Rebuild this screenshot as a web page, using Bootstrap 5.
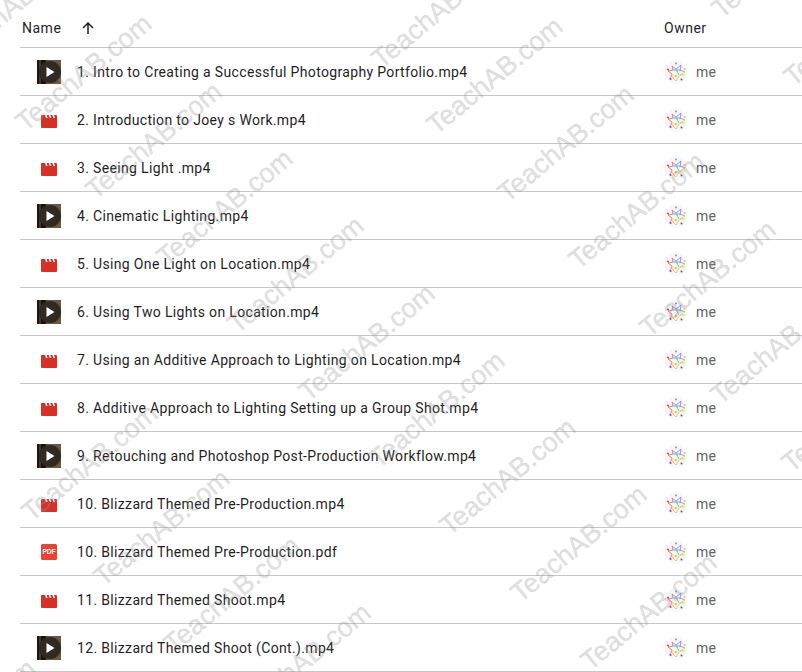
<!DOCTYPE html>
<html lang="en">

<head>
  <meta charset="UTF-8" />
  <meta name="viewport" content="width=device-width, initial-scale=1" />
  <title>Files</title>
  <link href="https://cdn.jsdelivr.net/npm/bootstrap@5.3.0/dist/css/bootstrap.min.css" rel="stylesheet" />
  <style>
    body {
      background-color: #fff;
      color: #1f1f1f;
      font-family: Roboto, "Liberation Sans", sans-serif;
      font-size: 14px;
      overflow: hidden;
      height: 672px;
    }

    .file-list {
      padding-left: 20px;
    }

    .list-head,
    .file-row {
      border-bottom: 1px solid #c7c7c7;
    }

    .list-head {
      height: 48px;
      padding-top: 10px;
      letter-spacing: .5px;
    }

    .file-row {
      height: 48px;
      padding-top: 1px;
    }

    .col-name {
      width: 644px;
      flex: none;
    }

    .head-name {
      padding-left: 2px;
    }

    .sort-arrow {
      margin-left: 19px;
      margin-top: -2px;
    }

    .icon-cell {
      width: 57px;
      flex: none;
      display: flex;
      justify-content: center;
      padding-left: 1px;
    }

    .icon-clap {
      margin-top: 3px;
    }

    .file-title {
      letter-spacing: .34px;
      white-space: nowrap;
      padding-top: 1px;
    }

    .owner-pic {
      margin-right: 8px;
    }

    .owner-name {
      color: #5f6368;
      letter-spacing: .25px;
      padding-top: 1px;
    }

    .watermarks {
      position: absolute;
      inset: 0;
      overflow: hidden;
      pointer-events: none;
    }

    .wm-text {
      position: absolute;
      transform: translate(-50%, -50%) rotate(-39.5deg);
      font-family: "Liberation Sans", sans-serif;
      font-size: 27px;
      line-height: 1;
      color: rgba(150, 150, 150, .3);
      white-space: nowrap;
      -webkit-text-stroke: .4px rgba(150, 150, 150, .3);
    }
  </style>
</head>

<body>
  <svg width="0" height="0" class="position-absolute">
    <symbol id="ico-video" viewBox="0 0 24 24">
      <rect width="24" height="24" fill="#6b5a3a" />
      <rect width="9" height="24" fill="#1b1510" />
      <rect x="2" width="2" height="24" fill="#4a3826" />
      <circle cx="13" cy="12" r="11" fill="#2f2a24" />
      <path d="M9.5 7 L17.5 12 L9.5 17 Z" fill="#fff" />
    </symbol>
    <symbol id="ico-clap" viewBox="0 0 16 13">
      <path d="M0 1 Q0 0 1 0 H15 Q16 0 16 1 V12 Q16 13 15 13 H1 Q0 13 0 12 Z" fill="#d93025" />
      <path d="M4 0 L5 3 H6.6 L5.6 0 Z M7.7 0 L8.7 3 H10.3 L9.3 0 Z M11.4 0 L12.4 3 H14 L13 0 Z" fill="#fff" />
    </symbol>
    <symbol id="ico-pdf" viewBox="0 0 16 16">
      <rect width="16" height="16" rx="1.5" fill="#ea4335" />
      <text x="8" y="10.4" text-anchor="middle" font-family="Liberation Sans, sans-serif" font-weight="700" font-size="6.6" fill="#fff">PDF</text>
    </symbol>
    <symbol id="ico-owner" viewBox="0 0 24 24">
      <circle cx="12" cy="12" r="11.5" fill="#f6f6fa" />
      <g fill="none" stroke-width=".8">
        <path d="M4 11 L9 10 L8 6 M4 11 L8 14 L6 19" stroke="#f2664b" />
        <path d="M8 6 L12 9 L17 5 L16 11" stroke="#a764c9" />
        <path d="M9 10 H16 L21 12 M12 9 L15 15" stroke="#35aee8" />
        <path d="M21 12 L16 15 H21 M8 14 L8 17 L12 21 L16 15" stroke="#fbc02d" />
      </g>
      <circle cx="12" cy="3.5" r="1" fill="#35aee8" />
      <circle cx="4" cy="9.5" r="1" fill="#e53935" />
      <circle cx="20.5" cy="9" r="1" fill="#fbc02d" />
      <circle cx="6.5" cy="19" r="1" fill="#8e44ad" />
      <circle cx="17.5" cy="19.5" r="1" fill="#00897b" />
      <circle cx="12" cy="16" r="1.2" fill="#fbc02d" />
    </symbol>
  </svg>

  <div class="file-list">
    <div class="list-head d-flex align-items-center">
      <div class="col-name head-name d-flex align-items-center">
        <span>Name</span>
        <svg class="sort-arrow" width="16" height="16" viewBox="0 0 16 16">
          <path d="M8 14 V3 M3 8 L8 3 L13 8" fill="none" stroke="#1f1f1f" stroke-width="1.5" />
        </svg>
      </div>
      <span>Owner</span>
    </div>
    <div id="rows"></div>
  </div>

  <div id="marks" class="watermarks"></div>

  <script>
    const files = [
      ["video", "1. Intro to Creating a Successful Photography Portfolio.mp4"],
      ["clap", "2. Introduction to Joey s Work.mp4"],
      ["clap", "3. Seeing Light .mp4"],
      ["video", "4. Cinematic Lighting.mp4"],
      ["clap", "5. Using One Light on Location.mp4"],
      ["video", "6. Using Two Lights on Location.mp4"],
      ["clap", "7. Using an Additive Approach to Lighting on Location.mp4"],
      ["clap", "8. Additive Approach to Lighting Setting up a Group Shot.mp4"],
      ["video", "9. Retouching and Photoshop Post-Production Workflow.mp4"],
      ["clap", "10. Blizzard Themed Pre-Production.mp4"],
      ["pdf", "10. Blizzard Themed Pre-Production.pdf"],
      ["clap", "11. Blizzard Themed Shoot.mp4"],
      ["video", "12. Blizzard Themed Shoot (Cont.).mp4"]
    ];
    const iconSize = { video: [24, 24], clap: [16, 13], pdf: [16, 16] };

    document.getElementById("rows").innerHTML = files.map(([icon, name]) => `
      <div class="file-row d-flex align-items-center">
        <div class="col-name d-flex align-items-center">
          <div class="icon-cell"><svg class="icon-${icon}" width="${iconSize[icon][0]}" height="${iconSize[icon][1]}"><use href="#ico-${icon}" /></svg></div>
          <span class="file-title">${name}</span>
        </div>
        <svg class="owner-pic" width="24" height="24"><use href="#ico-owner" /></svg>
        <span class="owner-name">me</span>
      </div>`).join("");

    // watermark centres, read off the reference
    const marks = [
      [-32, 718], [780, -40], [852, 28], [440, 10],
      [90, 463], [162, 528], [232, 595], [303, 662]
    ];
    for (let k = 0; k < 10; k++) marks.push([13 + 70.7 * k, 6 + 67.3 * k]);
    for (let k = 0; k < 6; k++) marks.push([495 + 71 * k, 76 + 67.6 * k]);

    document.getElementById("marks").innerHTML = marks.map(([x, y]) =>
      `<span class="wm-text" style="left:${x}px;top:${y}px">TeachAB.com</span>`).join("");
  </script>
  <script src="https://cdn.jsdelivr.net/npm/bootstrap@5.3.0/dist/js/bootstrap.bundle.min.js"></script>
</body>

</html>
